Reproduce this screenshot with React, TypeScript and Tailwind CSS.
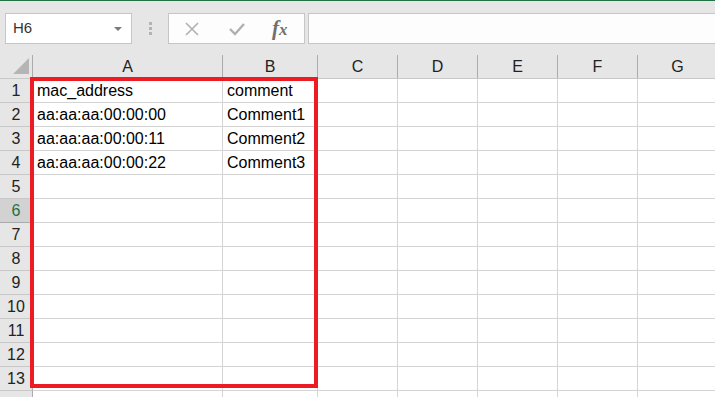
import React from 'react'

const cols = [
  { key: 'A', w: 'w-[190px]' },
  { key: 'B', w: 'w-[95px]' },
  { key: 'C', w: 'w-[80px]' },
  { key: 'D', w: 'w-[80px]' },
  { key: 'E', w: 'w-[80px]' },
  { key: 'F', w: 'w-[80px]' },
  { key: 'G', w: 'w-[80px]' }
]

const data: Record<number, string[]> = {
  1: ['mac_address', 'comment'],
  2: ['aa:aa:aa:00:00:00', 'Comment1'],
  3: ['aa:aa:aa:00:00:11', 'Comment2'],
  4: ['aa:aa:aa:00:00:22', 'Comment3']
}

// row 14 only peeks in at the bottom edge, its number is not visible
const rows = Array.from({ length: 14 }, (_, i) => i + 1)

const Toolbar: React.FC = () => (
  <div className="flex h-[54px] items-start gap-0 pt-[12px]">
    <div className="ml-[5px] flex h-[31px] w-[127px] items-center justify-between border border-[#c6c6c6] bg-white pl-[7px] pr-[9px]">
      <span className="text-[15px] text-[#333]">H6</span>
      <span className="h-0 w-0 border-x-[4px] border-t-[4px] border-x-transparent border-t-[#7a7a7a]" />
    </div>
    <div className="ml-[17px] flex h-[31px] flex-col justify-center gap-[2px]">
      <span className="block h-[3px] w-[3px] bg-[#b3b3b3]" />
      <span className="block h-[3px] w-[3px] bg-[#b3b3b3]" />
      <span className="block h-[3px] w-[3px] bg-[#b3b3b3]" />
    </div>
    <div className="ml-[16px] flex h-[31px] w-[137px] items-center border border-[#c6c6c6] bg-[#fdfdfd]">
      <svg className="ml-[15px]" width="16" height="16" viewBox="0 0 16 16">
        <path d="M2 2 L14 14 M14 2 L2 14" stroke="#b0b0b0" strokeWidth="1.6" />
      </svg>
      <svg className="ml-[28px]" width="18" height="16" viewBox="0 0 18 16">
        <path d="M2 8 L7 13 L16 3" stroke="#b0b0b0" strokeWidth="2.4" fill="none" />
      </svg>
      <span className="ml-[26px] font-['Liberation_Serif',serif] text-[21px] font-bold italic leading-none text-[#707070]">
        f<span className="text-[17px]">x</span>
      </span>
    </div>
    <div className="ml-[3px] h-[31px] flex-1 border-y border-l border-[#c6c6c6] bg-[#fdfdfd]" />
  </div>
)

export default function App() {
  return (
    <div className="relative h-[397px] w-[715px] overflow-hidden bg-[#e6e6e6] font-['Liberation_Sans',Arial,sans-serif]">
      <div className="h-px bg-[#217346]" />
      <Toolbar />
      <div className="flex h-[24px] border-b border-[#c8c8c8]">
        <div className="relative w-[33px] shrink-0 border-r border-[#ababab]">
          <svg className="absolute left-[13px] top-[3px]" width="16" height="16" viewBox="0 0 16 16">
            <path d="M16 0 L16 16 L0 16 Z" fill="#b5b5b5" />
          </svg>
        </div>
        {cols.map(c => (
          <div
            key={c.key}
            className={`${c.w} flex shrink-0 items-center justify-center border-r border-[#ababab] text-[16px] text-[#222]`}
          >
            {c.key}
          </div>
        ))}
      </div>
      <div className="bg-white">
        {rows.map(r => (
          <div key={r} className="flex h-[24px]">
            <div
              className={`flex w-[33px] shrink-0 items-center justify-center border-b border-r text-[16px] ${
                r === 6
                  ? 'border-b-[#ababab] border-r-[#ababab] bg-[#d2d2d2] text-[#217346]'
                  : 'border-b-[#c8c8c8] border-r-[#ababab] bg-[#e6e6e6] text-[#222]'
              }`}
            >
              {r < 14 ? r : ''}
            </div>
            {cols.map((c, i) => (
              <div
                key={c.key}
                className={`${c.w} flex shrink-0 items-center border-b border-r border-[#d4d4d4] pl-[4px] text-[16px] text-black`}
              >
                {data[r]?.[i] ?? ''}
              </div>
            ))}
          </div>
        ))}
      </div>
      <div className="pointer-events-none absolute left-[30px] top-[77px] h-[311px] w-[288px] border-4 border-[#ed1c24]" />
    </div>
  )
}
